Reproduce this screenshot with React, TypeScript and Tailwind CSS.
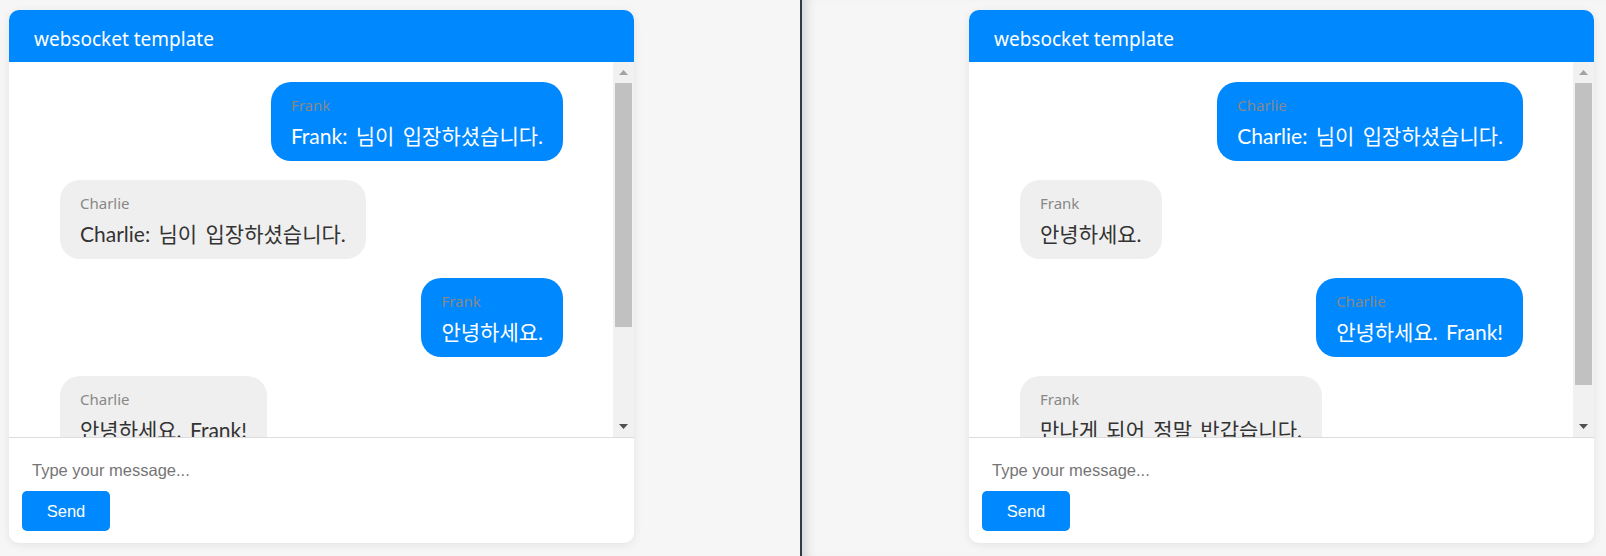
type Msg = { sender: string; text: string; mine: boolean }

const leftMessages: Msg[] = [
  { sender: 'Frank', text: 'Frank: 님이 입장하셨습니다.', mine: true },
  { sender: 'Charlie', text: 'Charlie: 님이 입장하셨습니다.', mine: false },
  { sender: 'Frank', text: '안녕하세요.', mine: true },
  { sender: 'Charlie', text: '안녕하세요. Frank!', mine: false },
  { sender: 'Frank', text: '만나게 되어 정말 반갑습니다.', mine: true },
]

const rightMessages: Msg[] = [
  { sender: 'Charlie', text: 'Charlie: 님이 입장하셨습니다.', mine: true },
  { sender: 'Frank', text: '안녕하세요.', mine: false },
  { sender: 'Charlie', text: '안녕하세요. Frank!', mine: true },
  { sender: 'Frank', text: '만나게 되어 정말 반갑습니다.', mine: false },
]

function Scrollbar({ thumb }: { thumb: number }) {
  return (
    <div className="w-[21px] shrink-0 bg-[#f1f1f1] flex flex-col">
      <div className="h-[21px] flex items-center justify-center">
        <svg width="9" height="5" viewBox="0 0 9 5">
          <path d="M0 5 L4.5 0 L9 5 Z" fill="#a3a3a3" />
        </svg>
      </div>
      <div className="flex-1 px-[2px]">
        <div className="bg-[#c1c1c1]" style={{ height: thumb }} />
      </div>
      <div className="h-[21px] flex items-center justify-center">
        <svg width="9" height="5" viewBox="0 0 9 5">
          <path d="M0 0 L9 0 L4.5 5 Z" fill="#505050" />
        </svg>
      </div>
    </div>
  )
}

function Bubble({ msg }: { msg: Msg }) {
  return (
    <div className={`flex shrink-0 ${msg.mine ? 'justify-end' : 'justify-start'}`}>
      <div
        className={`rounded-[20px] pt-[12px] pb-[11px] px-[20px] ${
          msg.mine ? 'bg-[#0088ff] text-white' : 'bg-[#efefef] text-[#333333]'
        }`}
      >
        <div className="text-[15px] leading-[22px] text-[#888888]">{msg.sender}</div>
        <div className="mt-[6px] text-[21px] leading-[28px] whitespace-nowrap [word-spacing:3px] font-['Lato','Noto_Sans_CJK_KR',sans-serif]">
          {msg.text}
        </div>
      </div>
    </div>
  )
}

function ChatCard({ messages, thumb }: { messages: Msg[]; thumb: number }) {
  return (
    <div className="w-[625px] h-[533px] bg-white rounded-[10px] shadow-[0_2px_10px_rgba(0,0,0,0.08)] flex flex-col overflow-hidden">
      {/* header */}
      <div className="h-[52px] shrink-0 bg-[#0088ff] text-white text-[19px] pl-[25px] pt-[6px] flex items-center">
        websocket template
      </div>

      {/* messages */}
      <div className="h-[375px] shrink-0 flex">
        <div className="flex-1 overflow-hidden pt-[20px] pl-[51px] pr-[50px] flex flex-col gap-[19px]">
          {messages.map((m, i) => (
            <Bubble key={i} msg={m} />
          ))}
        </div>
        <Scrollbar thumb={thumb} />
      </div>

      {/* input */}
      <div className="flex-1 border-t border-[#dddddd] pt-[12px] px-[13px]">
        <input
          type="text"
          placeholder="Type your message..."
          className="block w-full h-[40px] px-[10px] outline-none bg-transparent text-[16.5px] font-['Liberation_Sans',Arial,sans-serif] placeholder:text-[#757575]"
        />
        <button className="mt-[1px] w-[88px] h-[40px] bg-[#0088ff] text-white rounded-[5px] text-[16.5px] font-['Liberation_Sans',Arial,sans-serif]">
          Send
        </button>
      </div>
    </div>
  )
}

export default function App() {
  return (
    <div className="w-full h-screen flex bg-[#f6f6f6] overflow-hidden font-['Noto_Sans','Noto_Sans_CJK_KR',sans-serif]">
      <div className="w-[800px] shrink-0 pl-[9px] pt-[10px]">
        <ChatCard messages={leftMessages} thumb={244} />
      </div>
      <div className="w-[2px] shrink-0 bg-[#2f3b47]" />
      <div className="flex-1 pl-[167px] pt-[10px] shadow-[inset_12px_0_12px_-8px_rgba(0,0,0,0.14)]">
        <ChatCard messages={rightMessages} thumb={302} />
      </div>
    </div>
  )
}
